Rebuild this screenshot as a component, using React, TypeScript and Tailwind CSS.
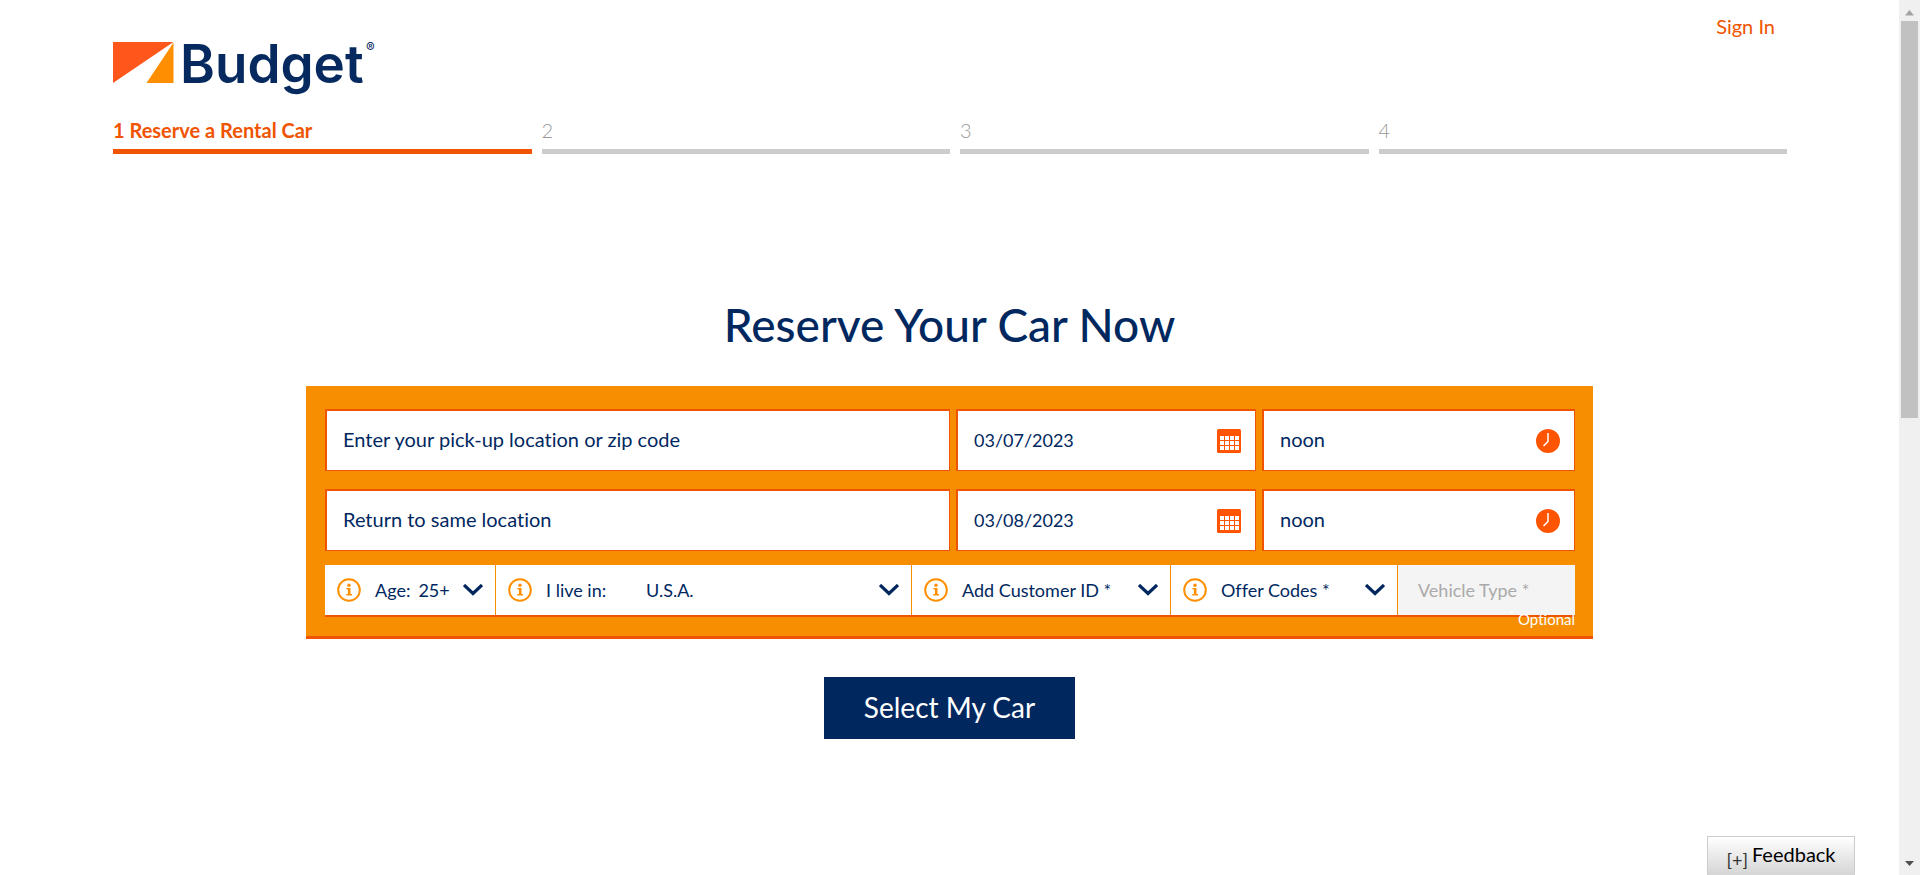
import type { ReactNode } from "react";

const steps = ["1 Reserve a Rental Car", "2", "3", "4"];

function Logo() {
  return (
    <svg width="272" height="80" viewBox="0 -18 272 80" role="img" aria-label="Budget">
      <path d="M0 0H60.500L0 41Z" fill="#ff571b" />
      <path d="M60.500 0.500V41H33.500Z" fill="#ff8f00" />
      <text x="67" y="41" fontFamily="Inter, sans-serif" fontWeight="600" fontSize="53" fill="#062a5f">
        Budget
      </text>
      <text x="253" y="10" fontFamily="Inter, sans-serif" fontWeight="500" fontSize="13" fill="#062a5f">
        ®
      </text>
    </svg>
  );
}

function CalendarIcon() {
  const columns = [3, 8, 13, 18];
  const rows = [7, 12, 17];
  return (
    <svg width="24" height="24" viewBox="0 0 24 24" aria-hidden="true">
      <rect width="24" height="24" rx="1.500" fill="#ff5400" />
      {rows.map((y) => columns.map((x) => <rect key={`${x}-${y}`} x={x} y={y} width="4" height="4" fill="#fff" />))}
    </svg>
  );
}

function ClockIcon() {
  return (
    <svg width="24" height="24" viewBox="0 0 24 24" aria-hidden="true">
      <circle cx="12" cy="12" r="12" fill="#ff5400" />
      <path d="M12 4V12.500L7.500 17" fill="none" stroke="#fff" strokeWidth="1.500" />
    </svg>
  );
}

function InfoIcon() {
  return (
    <svg width="24" height="24" viewBox="0 0 24 24" className="shrink-0" aria-hidden="true">
      <circle cx="12" cy="12" r="10.800" fill="none" stroke="#ff8f00" strokeWidth="2" />
      <circle cx="12" cy="7.300" r="1.700" fill="#ff8f00" />
      <path d="M9.500 10H13.500V16H15V17.500H9.300V16H11V11.500H9.500Z" fill="#ff8f00" />
    </svg>
  );
}

function Chevron() {
  return (
    <svg width="20" height="12" viewBox="0 0 20 12" className="pointer-events-none shrink-0" aria-hidden="true">
      <path d="M1 1L10 9.500L19 1" fill="none" stroke="#00285f" strokeWidth="3.200" />
    </svg>
  );
}

const box = "flex h-[62px] items-center border-t-2 border-l-2 border-r border-b border-[#f05400] bg-white";
const field =
  "h-full w-full min-w-0 flex-1 appearance-none bg-transparent pl-4 outline-none placeholder:text-[#00285f]";

function TripRow({ place, name, date }: { place: string; name: string; date: string }) {
  return (
    <div className="grid grid-cols-[625fr_300fr_313fr] gap-1.5">
      <label className={box}>
        <input className={`${field} pb-1 text-xl`} type="text" placeholder={place} aria-label={`${name} location`} />
      </label>
      <label className={`${box} pr-3.5`}>
        <input className={`${field} pb-0.5 text-lg`} type="text" defaultValue={date} aria-label={`${name} date`} />
        <CalendarIcon />
      </label>
      <label className={`${box} pr-3.5`}>
        <select className={`${field} pb-1 text-xl`} defaultValue="noon" aria-label={`${name} time`}>
          <option>noon</option>
          <option>1:00 PM</option>
        </select>
        <ClockIcon />
      </label>
    </div>
  );
}

function OptionCell({ children }: { children: ReactNode }) {
  return <div className="flex items-center border-r border-[#f78d00] bg-white pr-3 pl-3">{children}</div>;
}

const picker = "h-full w-full appearance-none bg-transparent outline-none";

export default function App() {
  return (
    <div className="flex min-h-screen bg-white font-[Lato,sans-serif] text-[#00285f] [font-variant-ligatures:none]">
      <div className="relative flex-1">
        <header className="pr-28 pl-[113px]">
          <div className="flex h-[116px] items-start justify-between pr-3">
            <a href="#home" className="mt-6 block">
              <Logo />
            </a>
            <a href="#sign-in" className="mt-3.5 text-xl leading-6 text-[#f05400]">
              Sign In
            </a>
          </div>
          <ol className="grid grid-cols-4">
            {steps.map((step, i) => (
              <li key={step} className={i === 0 ? "font-bold text-[#f05400]" : "pl-2.5 font-light text-[#999]"}>
                <div className="h-[33px] text-xl leading-7">{step}</div>
                <div className={i === 0 ? "h-[5px] bg-[#f05400]" : "h-[5px] bg-[#ccc]"} />
              </li>
            ))}
          </ol>
        </header>

        <main className="mx-auto mt-[141px] w-full max-w-[1287px]">
          <h1 className="text-center text-[46px] leading-[60px] font-medium">Reserve Your Car Now</h1>
          <form className="mt-[31px]">
            <div className="border-b-[3px] border-[#f05400] bg-[#f78d00] pt-[23px] pr-[18px] pb-[19px] pl-[19px]">
              <div className="flex flex-col gap-[18px]">
                <TripRow name="Pick-up" place="Enter your pick-up location or zip code" date="03/07/2023" />
                <TripRow name="Return" place="Return to same location" date="03/08/2023" />
              </div>
              <div className="relative mt-3.5">
                <div className="grid h-[52px] grid-cols-[171fr_416fr_259fr_227fr_177fr] border-b-2 border-[#f05400] text-lg">
                  <OptionCell>
                    <InfoIcon />
                    <label htmlFor="age" className="ml-3.5 shrink-0">
                      Age:
                    </label>
                    <select id="age" className={`${picker} ml-2`}>
                      <option>25+</option>
                      <option>24</option>
                    </select>
                    <Chevron />
                  </OptionCell>
                  <OptionCell>
                    <InfoIcon />
                    <label htmlFor="country" className="ml-3.5 w-[100px] shrink-0">
                      I live in:
                    </label>
                    <select id="country" className={picker}>
                      <option>U.S.A.</option>
                      <option>Canada</option>
                    </select>
                    <Chevron />
                  </OptionCell>
                  <OptionCell>
                    <InfoIcon />
                    <button type="button" className="ml-3.5 flex h-full flex-1 items-center justify-between">
                      Add Customer ID *
                      <Chevron />
                    </button>
                  </OptionCell>
                  <OptionCell>
                    <InfoIcon />
                    <button type="button" className="ml-3.5 flex h-full flex-1 items-center justify-between">
                      Offer Codes *
                      <Chevron />
                    </button>
                  </OptionCell>
                  <button type="button" disabled className="bg-[#f4f4f4] pl-5 text-left text-[#aaa]">
                    Vehicle Type *
                  </button>
                </div>
                <div className="absolute right-0 -bottom-3 text-[15px] leading-5 text-white">
                  <sup>*</sup> Optional
                </div>
              </div>
            </div>
            <button type="submit" className="mx-auto mt-[38px] block h-[62px] w-[251px] bg-[#00285f] pb-0.5 text-[28px] text-white">
              Select My Car
            </button>
          </form>
        </main>

        <button
          type="button"
          className="absolute right-11 bottom-0 flex h-[39px] w-[148px] items-center justify-center gap-1 border border-b-0 border-[#ccc] bg-linear-to-b from-white to-[#d5d5d5] text-black"
        >
          <span className="mt-2 text-lg leading-6 text-[#333]">[+]</span>
          <span className="mb-1 text-xl leading-6">Feedback</span>
        </button>
      </div>

      <div className="flex w-[21px] flex-col items-center bg-[#f0f0f0]" aria-hidden="true">
        <svg width="17" height="21" viewBox="0 0 17 21">
          <path d="M4 15.500L8.500 10L13 15.500Z" fill="#a3a3a3" />
        </svg>
        <div className="h-[397px] w-[17px] bg-[#c1c1c1]" />
        <svg width="17" height="23" viewBox="0 0 17 23" className="mt-auto">
          <path d="M4 9L8.500 14L13 9Z" fill="#505050" />
        </svg>
      </div>
    </div>
  );
}
